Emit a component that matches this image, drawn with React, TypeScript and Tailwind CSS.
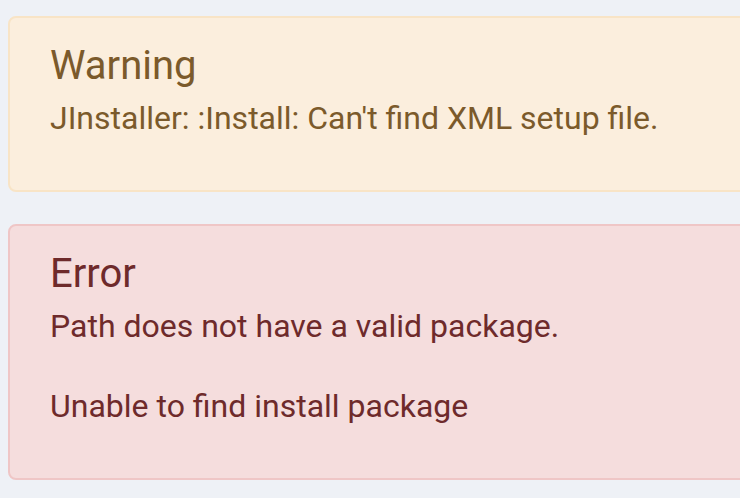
const messages = [
  {
    kind: "warning",
    title: "Warning",
    lines: ["JInstaller: :Install: Can't find XML setup file."],
  },
  {
    kind: "error",
    title: "Error",
    lines: ["Path does not have a valid package.", "Unable to find install package"],
  },
];

const styles = {
  warning: "bg-[#fbeedd] border-[#f8e4c6] text-[#7b5a2b]",
  error: "bg-[#f5dddd] border-[#efc6c6] text-[#6e2a2b]",
};

export default function App() {
  return (
    <div
      className="h-[498px] w-[740px] overflow-hidden bg-[#eef1f6] pl-2 pt-4"
      style={{ fontFamily: "Roboto, 'Noto Sans', sans-serif" }}
    >
      <div className="flex w-[800px] flex-col gap-8">
        {messages.map((m) => (
          <div
            key={m.kind}
            className={`rounded-lg border-2 px-10 pt-6 pb-12 ${styles[m.kind as keyof typeof styles]}`}
          >
            <h4 className="mb-1 text-[40px] leading-[48px] font-normal">{m.title}</h4>
            <div className="flex flex-col gap-8">
              {m.lines.map((line) => (
                <p key={line} className="text-[32px] leading-[48px]">
                  {line}
                </p>
              ))}
            </div>
          </div>
        ))}
      </div>
    </div>
  );
}
